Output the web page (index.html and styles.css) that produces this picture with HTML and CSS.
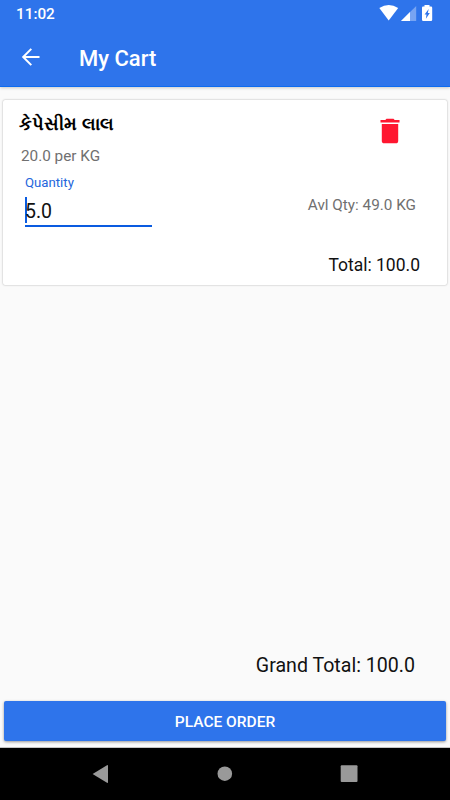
FILE: index.html
```html
<!DOCTYPE html>
<html lang="en">
<head>
    <meta charset="UTF-8">
    <meta name="viewport" content="width=device-width, initial-scale=1.0">
    <title>My Cart</title>
    <link rel="stylesheet" href="styles.css">
</head>
<body>
    <header class="header">
        <div class="status-bar">
            <span>11:02</span>
            <svg class="status-icons" width="56" height="18" viewBox="0 0 56 18" fill="#fff">
                <path d="M0.300 5Q9.700 -0.800 19.200 5L9.700 17.500Z"/>
                <path d="M22 18L37.200 3V18Z" opacity="0.350"/>
                <path d="M22 18L31 9.100V18Z"/>
                <path fill-rule="evenodd" d="M44 3.500H45.500V2H50.500V3.500H52Q53.200 3.500 53.200 4.700V16.800Q53.200 18 52 18H44.200Q43 18 43 16.800V4.700Q43 3.500 44 3.500ZM49.700 6L45.600 11.500H47.500L46.900 15.700L50.800 10.100H48.800Z"/>
            </svg>
        </div>
        <div class="toolbar">
            <svg class="back" width="20" height="20" viewBox="0 0 20 20" fill="none" stroke="#fff" stroke-width="2">
                <path d="M18.500 10H2.500M10.300 1.900L2.200 10L10.300 18.100"/>
            </svg>
            <h1>My Cart</h1>
        </div>
    </header>

    <main class="content">
        <section class="card">
            <div class="card-top">
                <div>
                    <h2 class="item-name" lang="gu">કેપેસીમ લાલ</h2>
                    <p class="price">20.0 per KG</p>
                </div>
                <svg class="delete" width="20" height="26" viewBox="0 0 20 26" fill="#ff1630">
                    <path d="M0.500 2H5.300L6.500 0.800H13.500L14.700 2H19.500V4.600H0.500Z"/>
                    <path d="M1.800 6H18.200V22.700Q18.200 25.300 15.600 25.300H4.400Q1.800 25.300 1.800 22.700Z"/>
                </svg>
            </div>
            <div class="card-middle">
                <div class="field">
                    <label>Quantity</label>
                    <div class="input"><span class="caret"></span>5.0</div>
                </div>
                <span class="available">Avl Qty: 49.0 KG</span>
            </div>
            <p class="total">Total: 100.0</p>
        </section>

        <p class="grand-total">Grand Total: 100.0</p>
        <button class="place-order">PLACE ORDER</button>
    </main>

    <nav class="nav-bar">
        <svg width="18" height="20" viewBox="0 0 18 20" fill="#999">
            <path d="M0.600 10L15 1.200Q16 0.700 16 1.800V18.200Q16 19.300 15 18.800Z"/>
        </svg>
        <svg width="16" height="16" viewBox="0 0 16 16" fill="#999">
            <circle cx="7.800" cy="7.700" r="7.300"/>
        </svg>
        <svg width="18" height="18" viewBox="0 0 18 18" fill="#999">
            <rect x="0.700" y="0.300" width="16.800" height="16.800" rx="1"/>
        </svg>
    </nav>
</body>
</html>
```
FILE: styles.css
```css
:root {
    --primary: #2e74eb;
    --accent: #0a5be0;
    --bg: #fafafa;
}

* {
    margin: 0;
    padding: 0;
    box-sizing: border-box;
}

body {
    height: 100vh;
    display: flex;
    flex-direction: column;
    overflow: hidden;
    background: var(--bg);
    color: #111;
    font-family: Roboto, "Noto Sans", sans-serif;
}

.header {
    height: 87px;
    flex: none;
    background: var(--primary);
    color: white;
    border-bottom: 1px solid #0d6bf0;
    box-shadow: 0 1px 3px rgba(0, 0, 0, 0.2);
}

.status-bar {
    height: 28px;
    display: flex;
    justify-content: space-between;
    padding: 3px 15px 0 16px;
    font-size: 15.3px;
    font-weight: 500;
    line-height: 22px;
}

.toolbar {
    height: 58px;
    display: flex;
    align-items: center;
    padding-left: 21px;
}

.toolbar h1 {
    margin: 3px 0 0 38px;
    font-size: 22px;
    font-weight: 500;
    line-height: 28px;
}

.content {
    flex: 1;
    display: flex;
    flex-direction: column;
    padding: 13px 3px 7px;
}

.card {
    height: 185px;
    padding: 10px 27px 0 17px;
    background: white;
    border-radius: 2px;
    box-shadow: 0 0 2px rgba(0, 0, 0, 0.35);
}

.card-top {
    display: flex;
    justify-content: space-between;
}

.item-name {
    color: #000;
    font-size: 18.2px;
    font-weight: 700;
    line-height: 28px;
    margin-left: -1px;
}

.price {
    margin: 8px 0 0 1px;
    color: #707070;
    font-size: 15.3px;
    line-height: 20px;
}

.delete {
    margin: 8px 20px 0 0;
}

.card-middle {
    display: flex;
    justify-content: space-between;
    padding: 8px 4px 0 5px;
}

.field {
    width: 127px;
}

.field label {
    display: block;
    color: #2466dc;
    font-size: 13.2px;
    line-height: 17px;
}

.input {
    height: 36px;
    display: flex;
    align-items: center;
    border-bottom: 2px solid var(--accent);
    font-size: 19.5px;
    padding-top: 6px;
}

.caret {
    width: 2px;
    height: 26px;
    margin: -2px -2px 0 0;
    background: var(--accent);
}

.available {
    margin-top: 21px;
    color: #707070;
    font-size: 15.3px;
    line-height: 20px;
}

.total {
    margin-top: 26px;
    font-size: 17.5px;
    line-height: 25px;
    text-align: right;
}

.grand-total {
    margin: auto 32px 21px 0;
    font-size: 19.6px;
    line-height: 28px;
    text-align: right;
}

.place-order {
    height: 40px;
    margin: 0 1px;
    padding-top: 1px;
    border: none;
    border-radius: 2px;
    background: var(--primary);
    color: white;
    font-family: inherit;
    font-size: 15.5px;
    font-weight: 500;
    box-shadow: 0 1px 3px rgba(0, 0, 0, 0.4);
}

.nav-bar {
    height: 52px;
    flex: none;
    display: flex;
    align-items: center;
    justify-content: space-between;
    padding: 0 92px;
    background: #000;
    box-shadow: 0 -1px 0 #c4c4c4;
}
```
